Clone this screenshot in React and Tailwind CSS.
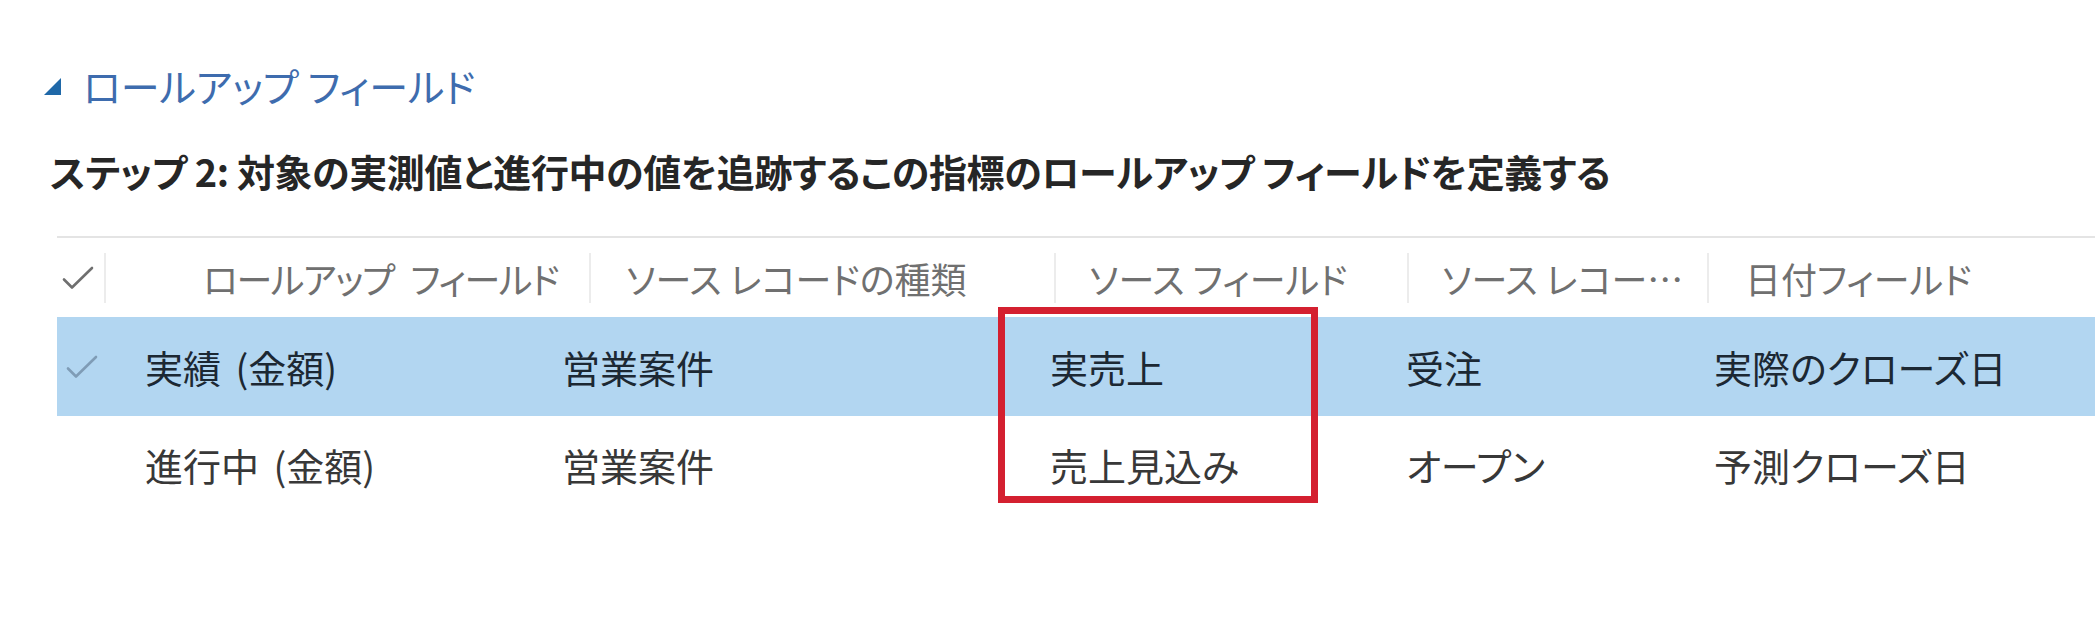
const FONT = "font-['Noto_Sans_CJK_JP','Noto_Sans',sans-serif] [font-feature-settings:'palt']"

function Check({ className = '' }) {
  return (
    <svg width="34" height="28" viewBox="0 0 34 28" fill="none" className={className} aria-hidden="true">
      <path d="M3 15.5l8 8L31 4" stroke="currentColor" strokeWidth="2.6" strokeLinecap="round" strokeLinejoin="round" />
    </svg>
  )
}

const head = [
  { label: 'ロールアップ フィールド', w: 'w-[485px]', pl: 'pl-[97px]', t: 'tracking-[-1.4px] [word-spacing:10px]' },
  { label: 'ソース レコードの種類', w: 'w-[465px]', pl: 'pl-[35px]', t: '' },
  { label: 'ソース フィールド', w: 'w-[353px]', pl: 'pl-[33px]', t: '' },
  { label: 'ソース レコー…', w: 'w-[300px]', pl: 'pl-[33px]', t: '' },
  { label: '日付フィールド', w: 'w-[388px]', pl: 'pl-[36px]', t: '' },
]

const rows = [
  { selected: true, cells: ['実績 (金額)', '営業案件', '実売上', '受注', '実際のクローズ日'] },
  { selected: false, cells: ['進行中 (金額)', '営業案件', '売上見込み', 'オープン', '予測クローズ日'] },
]

const cellW = ['w-[417px]', 'w-[488px]', 'w-[356px]', 'w-[308px]', 'w-[381px]']

export default function App() {
  return (
    <div className={`relative h-[621px] w-[2100px] overflow-hidden bg-white ${FONT}`}>
      <div className="flex items-center pl-[44px] pt-[57px]">
        <svg width="17" height="17" viewBox="0 0 17 17" className="mt-[2px] flex-none" aria-hidden="true">
          <polygon points="17,0 17,17 0,17" fill="#1f68a8" />
        </svg>
        <span className="ml-[22px] text-[39px] leading-[56px] text-[#3e6cae]">ロールアップ フィールド</span>
      </div>

      <h2 className="mt-[34px] pl-[50px] text-[38px] font-bold leading-[48px] tracking-[-0.4px] text-[#262626]">
        ステップ 2: 対象の実測値と進行中の値を追跡するこの指標のロールアップ フィールドを定義する
      </h2>

      <div className="ml-[57px] mt-[41px] w-[2038px] border-t-2 border-[#e4e4e4]">
        <div className="flex h-[79px] items-center text-[36px] text-[#707070]">
          <div className="flex w-[47px] items-center pl-[4px] text-[#6f6f6f]">
            <Check />
          </div>
          {head.map((h) => (
            <div key={h.label} className={`flex h-full items-center ${h.w}`}>
              <div className="h-[50px] w-[2px] flex-none bg-[#ececec]" />
              <span className={`whitespace-nowrap ${h.pl} ${h.t}`}>{h.label}</span>
            </div>
          ))}
        </div>

        {rows.map((r, i) => (
          <div
            key={i}
            className={`flex items-center text-[38px] ${r.selected ? 'h-[99px] bg-[#b2d6f1] text-[#1c2833]' : 'h-[96px] text-[#383838]'}`}
          >
            <div className="flex w-[88px] items-center pl-[8px] text-[#7f9cb6]">{r.selected && <Check />}</div>
            {r.cells.map((c, j) => (
              <div key={j} className={`whitespace-nowrap [word-spacing:6px] ${cellW[j]}`}>
                {c}
              </div>
            ))}
          </div>
        ))}
      </div>

      <div className="absolute left-[998px] top-[307px] h-[196px] w-[320px] border-[7px] border-[#d42030]" />
    </div>
  )
}
